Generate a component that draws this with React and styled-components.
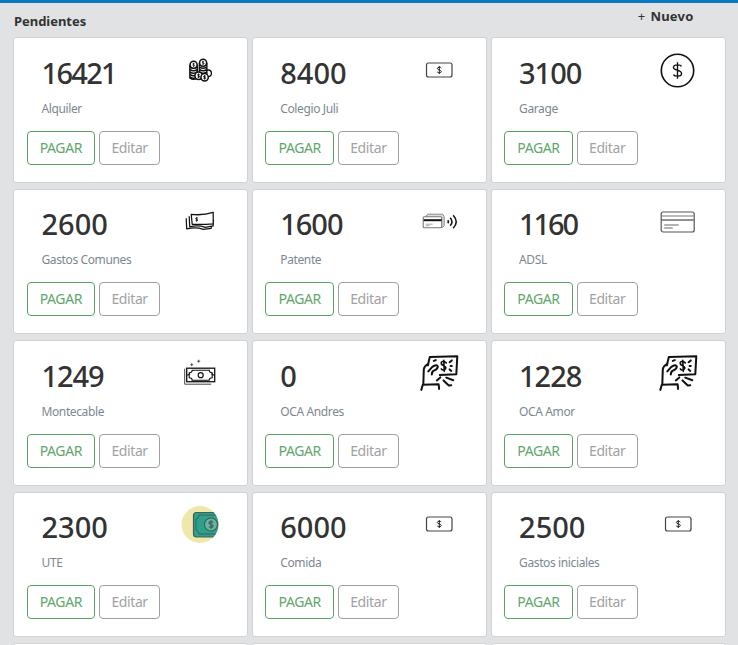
import React from 'react';
import styled, { createGlobalStyle } from 'styled-components';

const GlobalStyle = createGlobalStyle`
  * { box-sizing: border-box; }
  body {
    margin: 0;
    height: 645px;
    overflow: hidden;
    background: #e1e2e4;
    font-family: 'Noto Sans', 'Open Sans', sans-serif;
    color: #333;
  }
`;

const Page = styled.div`
  height: 645px;
  overflow: hidden;
  border-top: 3px solid #0c78bf;
  padding: 0 12px 0 13px;
`;

const Header = styled.header`
  display: flex;
  justify-content: space-between;
  height: 34.4px;
  padding: 0 32.5px 0 1px;
`;

const Title = styled.h1`
  margin: 8px 0 0;
  font-size: 13px;
  line-height: 20px;
  font-weight: 700;
  letter-spacing: -0.04px;
`;

const NewButton = styled.button`
  display: flex;
  gap: 5px;
  height: 20px;
  margin-top: 3px;
  padding: 0;
  border: 0;
  background: none;
  color: #333;
  font: 700 13px/20px 'Noto Sans', sans-serif;
  letter-spacing: 0.2px;
`;

const Plus = styled.span`
  font-weight: 400;
`;

const Grid = styled.main`
  display: grid;
  grid-template-columns: repeat(3, 235.3px);
  grid-auto-rows: 145.5px;
  gap: 6px 3.5px;
`;

const Card = styled.article`
  background: #fff;
  border: 1px solid #d0d2d5;
  border-radius: 3px;
  padding: 13.2px 13px 13px 12.7px;
`;

const CardTop = styled.div`
  display: flex;
  justify-content: space-between;
  height: 79px;
  padding: 0 12.2px 0 14.8px;
`;

const Amount = styled.div`
  height: 44px;
  margin-top: -1px;
  font-size: 29px;
  line-height: 44px;
  font-weight: 500;
  white-space: nowrap;
  letter-spacing: ${(p) => p.$tracking}px;
`;

const Label = styled.div`
  margin-top: 5px;
  font-size: 12px;
  line-height: 18px;
  letter-spacing: -0.38px;
  color: #7e8790;
`;

const Picture = styled.svg`
  display: block;
  width: 44px;
  height: 44px;
  margin-top: -4px;
  flex: none;
  fill: none;
  stroke: #111;
`;

const Actions = styled.div`
  display: flex;
  gap: 4px;
`;

const Action = styled.button`
  width: ${(p) => (p.$primary ? 68.4 : 61)}px;
  height: 34px;
  padding: 0;
  border: 1px solid ${(p) => (p.$primary ? '#57a463' : '#a0a0a3')};
  border-radius: 4px;
  background: #fff;
  color: ${(p) => (p.$primary ? '#62a66c' : '#a2a2a4')};
  font: 400 14px/22px 'Noto Sans', sans-serif;
  letter-spacing: -0.4px;
`;

const Dollar = ({ x, y, s = 1, w = 1.2 }) => (
  <path
    transform={`translate(${x} ${y}) scale(${s})`}
    strokeWidth={w / s}
    d="M4-4C3-6-4-6.500-4-3C-4 0 4-.5 4 3C4 6.500-3 6-4 4M0-8V8"
  />
);

const Stack = ({ x, top }) => (
  <g fill="#fff" strokeWidth="1.500">
    <path d={`M${x - 3.7} ${top}V31Q${x} 34 ${x + 3.7} 31V${top}`} />
    {[31, 28.5, 26, 23.5, 21, 18.5].filter((y) => y > top + 2).map((y) => (
      <path key={y} d={`M${x - 3.7} ${y - 1}Q${x} ${y + 2} ${x + 3.7} ${y - 1}`} />
    ))}
    <circle cx={x} cy={top} r="3.500" />
    <Dollar x={x} y={top} s={0.24} w={0.8} />
  </g>
);

const icons = {
  coins: (
    <g transform="translate(-2.4 -1.200)">
      <circle cx="32.500" cy="26.500" r="3.300" fill="#fff" strokeWidth="1.300" />
      <Stack x={18} top={18} />
      <Stack x={27.5} top={16} />
      {[[23, 29], [29, 30.500]].map(([x, y]) => (
        <g key={x}>
          <circle cx={x} cy={y} r="3.700" fill="#fff" strokeWidth="1.500" />
          <Dollar x={x} y={y} s={0.27} w={1} />
        </g>
      ))}
    </g>
  ),
  bill: (
    <g transform="translate(0 -1)">
      <rect x="9.500" y="16" width="25.500" height="14" rx="2" stroke="#444" strokeWidth="1.200" />
      <Dollar x={22.3} y={23} s={0.5} w={0.9} />
    </g>
  ),
  dollar: (
    <>
      <circle cx="21.500" cy="22.500" r="16.200" strokeWidth="1.600" />
      <Dollar x={21.5} y={22.5} s={1.02} w={1.35} />
    </>
  ),
  bills: (
    <g strokeWidth="1.250" strokeLinejoin="round" transform="translate(.2 .8)">
      <path fill="#fff" d="M8 18.500L8.500 29Q18 27 25 29.500L33 28.500V22" />
      <path fill="#fff" d="M11 16.500L11.500 27Q20 25 27 27.500L35 26V20" />
      <path fill="#fff" d="M13 14.500Q24 16 35 12.500V24Q24 25 14 24.500Z" />
      <Dollar x={18.5} y={19.5} s={0.27} w={0.9} />
    </g>
  ),
  contactless: (
    <g transform="translate(1.700 .7)">
      <path d="M7 17L9 14.500H24L25.500 17V26L23.500 28" stroke="#888" fill="#ddd" />
      <rect x="4.500" y="17" width="18.500" height="11" rx="1" fill="#fff" stroke="#777" strokeWidth="1.100" />
      <path d="M5 20.500H23" strokeWidth="2" />
      <path d="M7 24.500H14M7 26H11" stroke="#aaa" />
      <path d="M29 20.500Q30.500 22 29 23.500M31.500 18Q35 22 31.500 26M34.500 15.500Q40.500 22 34.500 28.500" strokeWidth="1.500" />
    </g>
  ),
  card: (
    <g transform="translate(-.3 .5)">
      <rect x="5.500" y="12.500" width="33" height="20" rx="2" stroke="#555" strokeWidth="1.200" />
      <path d="M6 16.500H38" stroke="#777" />
      <path d="M6 20.500H38" stroke="#222" />
      <path d="M8.500 25.500H23M8.500 28.500H17" stroke="#999" strokeWidth="1.500" />
    </g>
  ),
  cash: (
    <g transform="translate(.2 -.3)">
      <path d="M6.500 18V33.500H33" stroke="#444" />
      <rect x="8.500" y="17.500" width="28" height="13.500" strokeWidth="1.300" />
      <path d="M14 19.500H31Q31 22 34 22V27Q31 27 31 29.500H14Q14 27 11 27V22Q14 22 14 19.500ZM9 24.500L12 23M36 24.500L33 23" strokeWidth="1.100" />
      <circle cx="22.500" cy="24.500" r="2.500" strokeWidth="1.200" />
      <path d="M13.500 12.500V15.500M12 14H15M20.500 9V12M19 10.500H22" stroke="#555" />
    </g>
  ),
  hand: (
    <g strokeWidth="2" strokeLinecap="round" strokeLinejoin="round" transform="translate(-.7 -.6)">
      <path d="M11.500 15L13.500 6.500L41 5.800L40 23.800L23.500 24.500" />
      <path d="M5 39.500L6.500 34.300L22.300 33.800L22.800 38.500M7 34L7.500 19Q8 15.500 12 13.500" />
      <path d="M12 21L16 16.500Q20.500 13.500 21.500 16Q21.500 18.500 18 20Q15.500 21 15.500 24M17.500 10.500L19.500 9.700" />
      <path d="M30 12.500Q26.500 9.500 25 12Q24.500 14.500 27.500 15.200Q31 17 28.500 19.200Q26 20.300 25 18.500M27.500 9.800L28 21" strokeWidth="1.600" />
      <path d="M33.300 11.800L35.500 10M34.300 15.500H35.500M33.300 19L35 20.500M20.500 30L24 27M27.200 30L32.500 35L35 34.800M30 27.200L37 29.800" />
    </g>
  ),
  color: (
    <>
      <defs><clipPath id="coinBadge"><circle cx="22" cy="22.500" r="18.500" /></clipPath></defs>
      <circle cx="22" cy="22.500" r="18.500" fill="#eee8aa" stroke="none" />
      <g clipPath="url(#coinBadge)" stroke="#465e57" strokeWidth="1.200">
        <rect x="15.500" y="10.500" width="33" height="24.500" rx="3" fill="#2aa18d" />
        <path d="M40 13H21Q21 16 18 17V28Q21 29 21 32H40" strokeWidth="1" />
        <circle cx="33" cy="22.500" r="6.500" fill="#63b7a5" />
        <Dollar x={33} y={22.5} s={0.52} w={1.2} />
      </g>
    </>
  ),
};

const payments = [
  ['16421', 'Alquiler', 'coins'],
  ['8400', 'Colegio Juli', 'bill'],
  ['3100', 'Garage', 'dollar'],
  ['2600', 'Gastos Comunes', 'bills'],
  ['1600', 'Patente', 'contactless'],
  ['1160', 'ADSL', 'card'],
  ['1249', 'Montecable', 'cash'],
  ['0', 'OCA Andres', 'hand'],
  ['1228', 'OCA Amor', 'hand'],
  ['2300', 'UTE', 'color'],
  ['6000', 'Comida', 'bill'],
  ['2500', 'Gastos iniciales', 'bill'],
];

const trackingFor = (amount) => (-4.2 * (amount.split('1').length - 1)) / amount.length;

function PaymentCard({ amount, label, icon }) {
  return (
    <Card>
      <CardTop>
        <div>
          <Amount $tracking={trackingFor(amount)}>{amount}</Amount>
          <Label>{label}</Label>
        </div>
        <Picture viewBox="0 0 44 44" aria-hidden="true">{icons[icon]}</Picture>
      </CardTop>
      <Actions>
        <Action $primary>PAGAR</Action>
        <Action>Editar</Action>
      </Actions>
    </Card>
  );
}

export default function App() {
  return (
    <Page>
      <GlobalStyle />
      <Header>
        <Title>Pendientes</Title>
        <NewButton><Plus>+</Plus>Nuevo</NewButton>
      </Header>
      <Grid>
        {payments.map(([amount, label, icon]) => (
          <PaymentCard key={label} amount={amount} label={label} icon={icon} />
        ))}
        <Card />
        <Card />
        <Card />
      </Grid>
    </Page>
  );
}
